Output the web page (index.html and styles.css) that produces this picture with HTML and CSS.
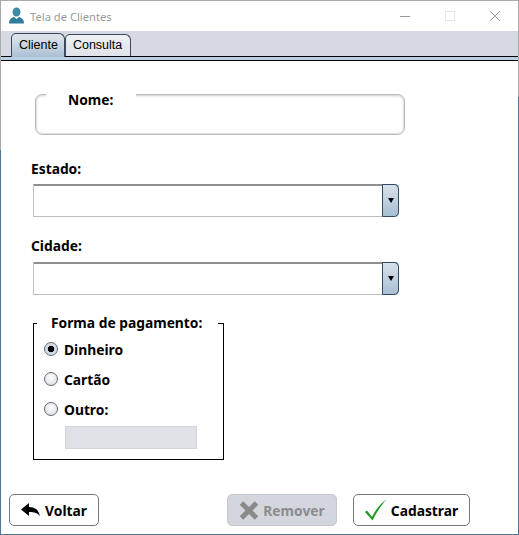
FILE: index.html
```html
<!DOCTYPE html>
<html lang="pt">
<head>
<meta charset="utf-8">
<title>Tela de Clientes</title>
<link rel="stylesheet" href="styles.css">
</head>
<body>
<div class="window">
  <header class="titlebar">
    <svg class="app-icon" width="18" height="18" viewBox="0 0 18 18"><ellipse cx="8.500" cy="5" rx="4" ry="4.600" fill="#3f8aa6"/><path d="M1 16.500c0-4 2.500-6 5-6.500l2.500 2 2.500-2c2.500.5 5 2.500 5 6.500z" fill="#2f7d9b"/></svg>
    <span class="title">Tela de Clientes</span>
    <div class="controls">
      <svg width="12" height="12" viewBox="0 0 12 12"><path d="M1 6.500h10" stroke="#999" stroke-width="1"/></svg>
      <svg width="12" height="12" viewBox="0 0 12 12"><rect x="1.500" y="1.500" width="9" height="9" fill="none" stroke="#e6e6e6"/></svg>
      <svg width="12" height="12" viewBox="0 0 12 12"><path d="M1 1l10 10M11 1L1 11" stroke="#999" stroke-width="1"/></svg>
    </div>
  </header>
  <nav class="tabs">
    <div class="tab tab-active">Cliente</div>
    <div class="tab">Consulta</div>
  </nav>
  <div class="tab-rule"></div>
  <main class="panel">
    <fieldset class="name-box"><legend>Nome:</legend></fieldset>
    <div class="label label-estado">Estado:</div>
    <div class="combo"><div class="combo-btn"><span class="arrow"></span></div></div>
    <div class="label label-cidade">Cidade:</div>
    <div class="combo"><div class="combo-btn"><span class="arrow"></span></div></div>
    <fieldset class="pay-box">
      <legend>Forma de pagamento:</legend>
      <div class="radio-row"><span class="radio radio-on"></span>Dinheiro</div>
      <div class="radio-row"><span class="radio"></span>Cartão</div>
      <div class="radio-row"><span class="radio"></span>Outro:</div>
      <div class="other-field"></div>
    </fieldset>
    <footer class="actions">
      <div class="btn btn-back">
        <svg width="19" height="14" viewBox="0 0 19 14"><path d="M0 6.500L8 0V4C14 4 18 7 19 13.500C17 10 13.500 9 8 9V13z" fill="#000"/></svg>
        Voltar
      </div>
      <div class="btn btn-remove">
        <svg width="20" height="19" viewBox="0 0 20 19"><path d="M2.500 2L17.500 17M17.500 2L2.500 17" stroke="#8a8a8a" stroke-width="5" fill="none"/></svg>
        Remover
      </div>
      <div class="btn btn-save">
        <svg width="22" height="22" viewBox="0 0 22 22"><path d="M0 13L2 11.500L7 18C10.500 11 15 5 21.500 0.500C15.500 7 11.500 13.500 7.500 21.500z" fill="#1a9a1f"/></svg>
        Cadastrar
      </div>
    </footer>
  </main>
</div>
</body>
</html>
```
FILE: styles.css
```css
* { box-sizing: border-box; }
html, body { margin: 0; padding: 0; }
body { width: 519px; height: 535px; overflow: hidden; background: #fff; font-family: "Noto Sans", Arial, sans-serif; }
.window {
  width: 519px; height: 535px; display: flex; flex-direction: column; padding: 1px;
  background:
    linear-gradient(#aaa, #aaa) top / 100% 1px no-repeat,
    linear-gradient(#4f7a9c, #4f7a9c) bottom / 100% 1px no-repeat,
    linear-gradient(#aaa 150px, #4f7a9c 150px) left / 1px 100% no-repeat,
    linear-gradient(#aaa 97px, #4f7a9c 97px) right / 1px 100% no-repeat,
    #fff;
}
.titlebar { height: 30px; display: flex; align-items: center; padding-left: 7px; flex: none; }
.app-icon { margin-right: 4px; }
.title { font-size: 11.200px; color: #9a9a9a; }
.controls { margin-left: auto; display: flex; gap: 33px; padding-right: 17px; }
.tabs { height: 25px; background: #d6d9e1; display: flex; align-items: flex-end; padding-left: 10px; flex: none; }
.tab {
  height: 22px; padding: 3px 8px 0 7px; font-family: "Liberation Sans", Arial, sans-serif; font-size: 12.500px; color: #000;
  border: 1px solid #3a4a5c; border-bottom: 0; border-radius: 5px 6px 0 0;
  background: linear-gradient(#f0f1f4, #dfe2e8);
}
.tab-active {
  height: 24px; padding: 4px 6px 0 7px; margin-bottom: -1px; position: relative;
  background: linear-gradient(#d9e0e8 20%, #a9c0d4);
}
.tab-rule { height: 5px; flex: none; background: #b9cfe4; border-top: 1px solid #000; border-bottom: 1px solid #000; }
.panel { flex: 1; display: flex; flex-direction: column; padding: 20px 0 0 32px; }
legend { font-weight: 700; font-size: 13.800px; color: #000; white-space: nowrap; }
.name-box {
  margin: 0 0 0 2px; width: 370px; height: 54px; padding: 0 0 0 10px;
  border: 1px solid #bdbdbd; border-radius: 7px;
  box-shadow: inset 0 0 0 1px #dedede, inset 0 1px 2px 1px #ececec;
}
.name-box legend { padding: 11px 0 0 22px; width: 90px; line-height: 16px; background: #fff; }
.label { font-weight: 700; font-size: 13.800px; line-height: 17px; color: #000; margin-left: -2px; }
.label-estado { margin-top: 25px; }
.label-cidade { margin-top: 20px; }
.combo {
  margin-top: 8px; width: 366px; height: 33px; display: flex; justify-content: flex-end;
  border: 1px solid #bdbdbd; border-top: 2px solid #8f8f8f; border-radius: 0 4px 4px 0; background: #fff;
}
.label-estado + .combo { margin-top: 7px; }
.combo-btn {
  width: 17px; margin: -2px -1px -1px 0; display: flex; align-items: center; justify-content: center;
  border: 1px solid #2f4a66; border-radius: 0 5px 5px 0; background: linear-gradient(#d9e1ea, #a8bfd3);
}
.arrow { width: 0; height: 0; border-left: 3.500px solid transparent; border-right: 3.500px solid transparent; border-top: 5px solid #000; }
.pay-box {
  margin: 20px 0 0; width: 191px; min-width: 0; height: 145px; padding: 3px 0 0 10px;
  border: 1px solid #000;
}
.pay-box legend { padding: 0 16px 0 14px; margin-left: -7px; line-height: 16px; }
.radio-row { display: flex; align-items: center; gap: 6px; height: 30px; font-weight: 700; font-size: 13.800px; color: #000; }
.radio {
  width: 14px; height: 14px; border-radius: 50%; border: 1px solid #5d6b7a;
  background: radial-gradient(circle at 50% 40%, #fff, #d3d7dd);
}
.radio-on { background: radial-gradient(circle, #000 0 3px, #c8d2dc 3.500px, #eef1f4); }
.other-field { width: 132px; height: 23px; margin: 2px 0 0 21px; background: #dfe1e6; border: 1px solid #d3d5da; }
.actions { display: flex; margin: 34px 0 0 -24px; }
.btn {
  height: 32px; display: flex; align-items: center; justify-content: center; gap: 4px;
  font-weight: 700; font-size: 13.800px; color: #000; background: #fff; border: 1px solid #73767a; border-radius: 5px;
}
.btn-back { width: 90px; gap: 5px; }
.btn-remove { width: 110px; margin-left: 128px; background: #d3d6dd; border-color: #c4c7cd; color: #8c8c8c; }
.btn-save { width: 117px; margin-left: 16px; }
```
